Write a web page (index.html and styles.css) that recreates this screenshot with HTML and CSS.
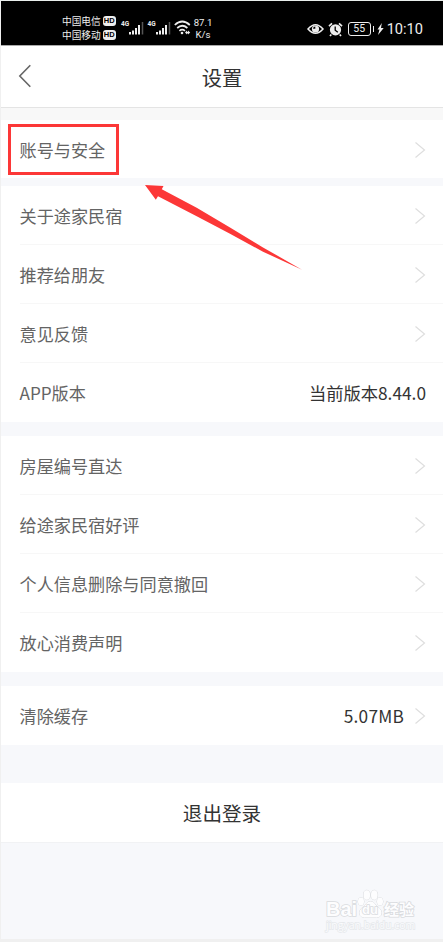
FILE: index.html
```html
<!DOCTYPE html>
<html lang="zh-CN">
<head>
<meta charset="utf-8">
<title>设置</title>
<link rel="stylesheet" href="styles.css">
</head>
<body>
<svg class="defs" width="0" height="0" aria-hidden="true">
  <symbol id="next" viewBox="0 0 12 18"><path d="M1.5 1.5 10.500 9 1.5 16.5" fill="none" stroke="#dedede" stroke-width="1.2"/></symbol>
  <symbol id="signal" viewBox="0 0 15 14"><path d="M1 13.500v-2.500M4 13.500V9.500M7 13.500V7M10 13.500V4" stroke="#eee" stroke-width="2"/><path d="M13.500 13.500V1" stroke="#555" stroke-width="1.5"/></symbol>
</svg>
<div class="screen">
  <div class="status">
    <div class="carriers">
      <div class="carrier">中国电信<span class="hd">HD</span></div>
      <div class="carrier">中国移动<span class="hd">HD</span></div>
    </div>
    <div class="cell"><span class="gen">4G</span><svg class="bars"><use href="#signal"/></svg></div>
    <div class="cell"><span class="gen">4G</span><svg class="bars"><use href="#signal"/></svg></div>
    <svg class="wifi" viewBox="0 0 17 15"><g fill="none" stroke="#eee" stroke-width="1.7"><path d="M.8 5Q8.2-2 15.8 5"/><path d="M3.2 8Q8.2 3.5 13.4 8"/><path d="M5.4 10.8Q8.2 8.5 11 10.8"/></g><circle cx="8" cy="13" r="1.3" fill="#eee"/><path d="M11 12.6l2-2v1.2h1v-1.2l2.2 2-2.2 2v-1.2h-1v1.2z" fill="#eee"/></svg>
    <div class="speed"><span>87.1</span><span>K/s</span></div>
    <div class="status-right">
      <svg class="eye" viewBox="0 0 17 12"><path d="M1 6Q8.500-2.600 16 6 8.500 14.600 1 6z" fill="none" stroke="#eee" stroke-width="1.5"/><circle cx="8.500" cy="6" r="3.600" fill="#eee"/><path d="M8.300 5.800V3.500a2.300 2.300 0 0 0-2.200 2.300z" fill="#000"/></svg>
      <svg class="alarm" viewBox="0 0 15 15"><circle cx="7.500" cy="7.800" r="5.600" fill="#eee"/><path d="M1 4.200 4 1.300M14 4.200 11 1.300M3.300 12.500 2 14M11.700 12.500 13 14" stroke="#eee" stroke-width="1.700"/><path d="M7.200 4.500v3.700l2.600 2" fill="none" stroke="#000" stroke-width="1.300"/></svg>
      <span class="battery">55</span><i class="tip"></i>
      <svg class="bolt" viewBox="0 0 7 12"><path d="M4.800 0 .5 6.500h2L1 12l5.700-7H4z" fill="#eee"/></svg>
      <span class="time">10:10</span>
    </div>
  </div>

  <header class="header">
    <svg class="back" viewBox="0 0 14 24"><path d="M12.300 1.200 1.800 12 12.300 22.800" fill="none" stroke="#666" stroke-width="1.600"/></svg>
    <h1>设置</h1>
  </header>

  <main>
    <section class="group account">
      <div class="row"><span class="label">账号与安全</span><svg class="next"><use href="#next"/></svg>
        <div class="highlight"></div>
        <svg class="arrow" viewBox="0 0 158 86"><path d="M0 0 18.500 1 16.800 4.200 51.700 22.700 85 42.400 118 62.400 157 84.700 118 66.700 85 48.700 51.700 31.200 13 11.200 10.800 14.800z" fill="#fc3737"/></svg>
      </div>
    </section>
    <section class="group">
      <div class="row"><span class="label">关于途家民宿</span><svg class="next"><use href="#next"/></svg></div>
      <div class="row"><span class="label">推荐给朋友</span><svg class="next"><use href="#next"/></svg></div>
      <div class="row"><span class="label">意见反馈</span><svg class="next"><use href="#next"/></svg></div>
      <div class="row"><span class="label">APP版本</span><span class="value">当前版本8.44.0</span></div>
    </section>
    <section class="group">
      <div class="row"><span class="label">房屋编号直达</span><svg class="next"><use href="#next"/></svg></div>
      <div class="row"><span class="label">给途家民宿好评</span><svg class="next"><use href="#next"/></svg></div>
      <div class="row"><span class="label">个人信息删除与同意撤回</span><svg class="next"><use href="#next"/></svg></div>
      <div class="row"><span class="label">放心消费声明</span><svg class="next"><use href="#next"/></svg></div>
    </section>
    <section class="group cache">
      <div class="row"><span class="label">清除缓存</span><span class="value size">5.07MB</span><svg class="next"><use href="#next"/></svg></div>
    </section>
    <div class="logout">退出登录</div>
  </main>

  <footer class="watermark">
    <div class="brand"><span class="bai">Bai</span>
      <span class="paw"><svg viewBox="0 0 27 30"><g fill="#fdfdfe" stroke="#d9dbde"><ellipse cx="4" cy="12.500" rx="3" ry="4"/><ellipse cx="9.800" cy="6" rx="3.300" ry="4.700"/><ellipse cx="17.300" cy="6" rx="3.300" ry="4.700"/><ellipse cx="23" cy="12.500" rx="3" ry="4"/><path d="M13.500 12.500c-3.500 0-4.200 3-7.500 5.500-6 4.700-3.500 10.500 1.500 10.500h12c5 0 7.500-5.800 1.500-10.500-3.300-2.500-4-5.500-7.500-5.500z"/></g></svg><b>du</b></span>
      <span class="jingyan">经验</span></div>
    <div class="site">jingyan.baidu.com</div>
  </footer>
</div>
</body>
</html>
```
FILE: styles.css
```css
* { box-sizing: border-box; }
body {
  margin: 0;
  background: #f0f0f0;
  font-family: "Noto Sans CJK SC", sans-serif;
}
.defs { position: absolute; }
.screen {
  display: flex;
  flex-direction: column;
  height: 942px;
  padding-left: 1px;
  border-top: 1px solid #e9eeec;
  border-bottom: 3px solid #f0f0f0;
  overflow: hidden;
}
.status {
  display: flex;
  align-items: flex-start;
  flex: none;
  height: 45px;
  padding: 13px 20px 0 61px;
  background: #000;
  border-bottom: 1px solid #aaa;
  color: #eee;
}
.carriers { width: 59px; }
.carrier {
  display: flex;
  align-items: center;
  height: 14px;
  font-size: 9.7px;
  line-height: 14px;
  white-space: nowrap;
}
.hd {
  width: 13px;
  height: 10px;
  margin-left: 2px;
  border-radius: 3px;
  background: #eee;
  color: #000;
  font: bold 7.5px/10px "Liberation Sans", sans-serif;
  text-align: center;
}
.cell {
  display: flex;
  align-items: flex-start;
  width: 26.5px;
  padding-top: 7px;
}
.gen { width: 8px; font: bold 6.5px/7px Roboto, sans-serif; }
.bars { width: 15px; height: 14px; }
.wifi { width: 17px; height: 15px; margin-top: 6px; }
.speed {
  display: flex;
  flex-direction: column;
  width: 22px;
  margin-left: 1px;
  padding-top: 3px;
  font: 9.6px/12px Roboto, sans-serif;
  text-align: center;
  white-space: nowrap;
}
.status-right {
  display: flex;
  align-items: center;
  height: 30px;
  margin-left: auto;
}
.eye { width: 17px; height: 12px; }
.alarm { width: 15px; height: 15px; margin: 0 5px 0 4px; }
.battery {
  width: 23px;
  height: 14px;
  border: 1px solid #eee;
  border-radius: 3px;
  font: 10.5px/12px Roboto, sans-serif;
  text-align: center;
}
.tip { width: 1px; height: 6px; margin-left: 2px; background: #eee; }
.bolt { width: 7px; height: 12px; margin: 0 3px 0 3px; }
.time { font: 14.6px/16px Roboto, sans-serif; }

.header {
  display: grid;
  grid-template-columns: 40px 1fr 40px;
  align-items: center;
  flex: none;
  height: 62px;
  background: #fff;
  border-bottom: 1px solid #e4e4e4;
}
.back { width: 14px; height: 24px; margin: 0 0 2px 17px; }
h1 {
  margin: 0;
  color: #333;
  font-size: 20.3px;
  font-weight: 400;
  line-height: 30px;
  text-align: center;
}
main { flex: none; background: #f7f8fb; }
.group { margin-bottom: 14px; background: #fff; }
.account { margin-bottom: 8px; border-top: 12px solid #f8f8f8; }
.row {
  position: relative;
  display: flex;
  align-items: center;
  height: 59px;
  margin-left: 18.5px;
  padding: 1px 17px 0 0;
}
.row + .row { box-shadow: 0 -1px #f7f7f7, inset 0 0 #fff; }
.account .row { height: 58px; }
.cache { margin-bottom: 38px; }
.label { color: #646464; font-size: 17.15px; line-height: 26px; }
.value {
  margin-left: auto;
  color: #333;
  font-size: 17.3px;
  line-height: 26px;
}
.next { width: 12px; height: 18px; margin-left: auto; }
.size { letter-spacing: .2px; }
.size + .next { margin-left: 10px; }
.highlight {
  position: absolute;
  left: -11.5px;
  top: 4px;
  width: 111px;
  height: 51px;
  border: 3px solid #fc3737;
}
.arrow {
  position: absolute;
  left: 125.5px;
  top: 65px;
  z-index: 1;
  width: 158px;
  height: 86px;
}
.logout {
  height: 60px;
  background: #fff;
  border-bottom: 1px solid #f1f2f4;
  color: #333;
  font-size: 19.6px;
  line-height: 59px;
  text-align: center;
}
.watermark {
  display: flex;
  flex: 1;
  flex-direction: column;
  justify-content: flex-end;
  padding: 0 0 8px 325px;
  background: #f7f8fb;
  color: #fdfdfe;
  -webkit-text-stroke: 1.6px #d9dbde;
  paint-order: stroke fill;
}
.brand { display: flex; align-items: flex-end; height: 30px; }
.bai { width: 31px; font: bold 20px/20px "Liberation Sans", sans-serif; }
.paw { position: relative; width: 27px; height: 30px; }
.paw svg { display: block; width: 27px; height: 30px; }
.paw b {
  position: absolute;
  left: 5px;
  top: 14px;
  font: bold 13px/14px "Liberation Sans", sans-serif;
}
.jingyan {
  padding-bottom: 1px;
  font-size: 15px;
  font-weight: 700;
  line-height: 18px;
  white-space: nowrap;
}
.site {
  font: 10.5px/12px "Open Sans", sans-serif;
  white-space: nowrap;
  color: #fafbfd;
  -webkit-text-stroke: 1.4px #e6e8eb;
}
```
